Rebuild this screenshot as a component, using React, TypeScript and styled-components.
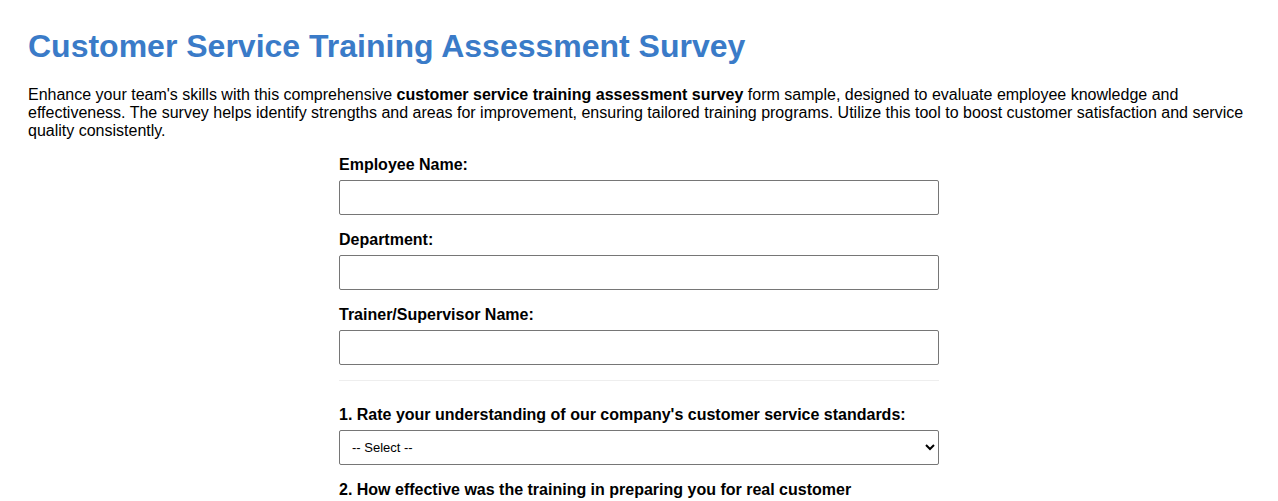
import React from 'react';
import styled, { createGlobalStyle } from 'styled-components';

const GlobalStyle = createGlobalStyle`
  html, body {
    margin: 0;
    padding: 0;
    background: #ffffff;
  }
  body {
    font-family: 'Liberation Sans', Arial, sans-serif;
    color: #000000;
  }
`;

const Page = styled.div`
  padding: 28px 28px 40px;
`;

const Title = styled.h1`
  margin: 0 0 21px;
  font-size: 32px;
  font-weight: bold;
  color: #3a7bc8;
`;

const Intro = styled.p`
  margin: 0 0 15px;
  font-size: 16px;
  line-height: 18px;
`;

const Form = styled.form`
  max-width: 600px;
  margin: 0 auto;
`;

const Field = styled.div`
  margin-bottom: 15px;
`;

const Label = styled.label`
  display: block;
  font-size: 16px;
  line-height: 19px;
  font-weight: bold;
  margin-bottom: 6px;
`;

const TextInput = styled.input`
  display: block;
  width: 100%;
  height: 35px;
  box-sizing: border-box;
  padding: 8px;
  border: 1px solid #767676;
  border-radius: 2px;
  font-family: 'Liberation Sans', Arial, sans-serif;
  font-size: 14px;
`;

const Select = styled.select`
  display: block;
  width: 100%;
  height: 35px;
  box-sizing: border-box;
  padding: 0 4px 0 8px;
  border: 1px solid #767676;
  border-radius: 2px;
  background: #ffffff;
  font-family: 'Liberation Sans', Arial, sans-serif;
  font-size: 13px;
  color: #000000;
`;

const Divider = styled.hr`
  border: none;
  border-top: 1px solid #eeeeee;
  margin: 1px 0 24px;
`;

const personFields = [
  { id: 'employee', label: 'Employee Name:' },
  { id: 'department', label: 'Department:' },
  { id: 'trainer', label: 'Trainer/Supervisor Name:' },
];

const options = ['-- Select --', 'Excellent', 'Good', 'Fair', 'Poor'];

export default function App() {
  return (
    <>
      <GlobalStyle />
      <Page>
        <Title>Customer Service Training Assessment Survey</Title>
        <Intro>
          Enhance your team's skills with this comprehensive{' '}
          <strong>customer service training assessment survey</strong> form sample, designed to
          evaluate employee knowledge and effectiveness. The survey helps identify strengths and
          areas for improvement, ensuring tailored training programs. Utilize this tool to boost
          customer satisfaction and service quality consistently.
        </Intro>
        <Form>
          {personFields.map((f) => (
            <Field key={f.id}>
              <Label htmlFor={f.id}>{f.label}</Label>
              <TextInput id={f.id} type="text" />
            </Field>
          ))}
          <Divider />
          <Field>
            <Label htmlFor="q1">
              1. Rate your understanding of our company's customer service standards:
            </Label>
            <Select id="q1" defaultValue="">
              {options.map((o, i) => (
                <option key={o} value={i === 0 ? '' : o}>
                  {o}
                </option>
              ))}
            </Select>
          </Field>
          <Field>
            <Label htmlFor="q2">
              2. How effective was the training in preparing you for real customer interactions?
            </Label>
            <Select id="q2" defaultValue="">
              {options.map((o, i) => (
                <option key={o} value={i === 0 ? '' : o}>
                  {o}
                </option>
              ))}
            </Select>
          </Field>
        </Form>
      </Page>
    </>
  );
}
